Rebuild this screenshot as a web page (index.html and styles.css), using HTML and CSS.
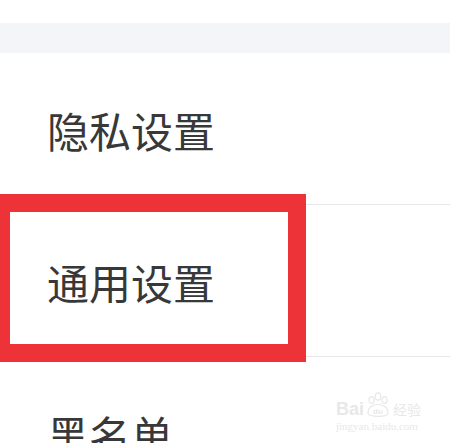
FILE: index.html
```html
<!DOCTYPE html>
<html lang="zh-CN">
<head>
  <meta charset="UTF-8" />
  <title>设置</title>
  <link rel="stylesheet" href="styles.css">
</head>
<body>

  <div class="top"></div>
  <div class="band"></div>

  <ul class="menu">
    <li class="item">隐私设置</li>
    <li class="item">通用设置</li>
    <li class="item">黑名单</li>
  </ul>

  <!-- annotation -->
  <div class="mark"></div>

  <div class="watermark">
    <div class="wm-logo">
      <span class="wm-bai">Bai</span>
      <svg class="wm-paw" width="26" height="26" viewBox="0 0 26 26">
        <ellipse cx="6.5" cy="8" rx="2.6" ry="3.4" fill="none" stroke="#e8e8e8" stroke-width="1.2"/>
        <ellipse cx="13" cy="4.5" rx="2.8" ry="3.6" fill="none" stroke="#e8e8e8" stroke-width="1.2"/>
        <ellipse cx="19.5" cy="8" rx="2.6" ry="3.4" fill="none" stroke="#e8e8e8" stroke-width="1.2"/>
        <path d="M3 21 C3 15 8 12.5 13 12.5 C18 12.5 23 15 23 21 C23 25.5 3 25.5 3 21 Z" fill="none" stroke="#e8e8e8" stroke-width="1.2"/>
        <text x="13" y="21.5" text-anchor="middle" font-size="8" font-weight="bold" font-family="Liberation Sans, sans-serif" fill="#e8e8e8">du</text>
      </svg>
      <span class="wm-jy">经验</span>
    </div>
    <div class="wm-url">jingyan.baidu.com</div>
  </div>

</body>
</html>
```

FILE: styles.css
```css
body {
  margin: 0;
  width: 450px;
  height: 443px;
  overflow: hidden;
  background: #fff;
  font-family: "Noto Sans CJK SC", "Noto Sans", sans-serif;
  position: relative;
}
.top {
  height: 23px;
}
.band {
  height: 30px;
  background: #f4f5f8;
}
.menu {
  list-style: none;
  margin: 0;
  padding: 0 0 0 47px;
}
.item {
  height: 152px;
  display: flex;
  align-items: center;
  font-size: 42px;
  color: #383838;
  border-bottom: 1px solid #e6e6eb;
  box-sizing: border-box;
  padding-top: 1px;
}
.mark {
  position: absolute;
  left: -8px;
  top: 194px;
  width: 278px;
  height: 132px;
  border: 18px solid #ee3338;
}
.watermark {
  position: absolute;
  left: 336px;
  top: 391px;
  color: #e8e8e8;
}
.wm-logo {
  display: flex;
  align-items: flex-end;
  height: 27px;
}
.wm-bai {
  font-family: "Liberation Sans", sans-serif;
  font-weight: bold;
  font-size: 18px;
  line-height: 18px;
}
.wm-paw {
  margin: 0 2px 0 1px;
}
.wm-jy {
  font-size: 14px;
  line-height: 18px;
}
.wm-url {
  font-family: "Liberation Serif", serif;
  font-size: 11px;
  margin-top: 2px;
}
```
